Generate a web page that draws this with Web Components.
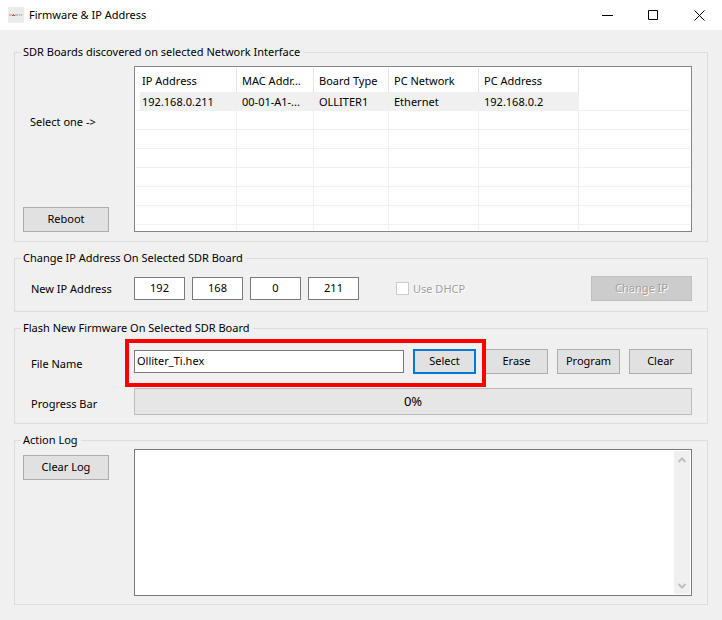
<!DOCTYPE html>
<html lang="en">
<head>
<meta charset="utf-8">
<meta name="viewport" content="width=device-width, initial-scale=1">
<title>Firmware &amp; IP Address</title>
<style>
  html { height: 100%; }
  body {
    margin: 0; min-height: 100%; display: flex;
    font: 11px/16px "Noto Sans", "Open Sans", sans-serif;
    color: #000; background: #f0f0f0;
  }
</style>
</head>
<body>
<firmware-window></firmware-window>

<script>
const define = (name, html, setup) => {
  const template = document.createElement('template');
  template.innerHTML = `<style>*{box-sizing:border-box}</style>${html}`;
  customElements.define(name, class extends HTMLElement {
    constructor() {
      super();
      this.attachShadow({ mode: 'open' }).append(template.content.cloneNode(true));
    }
    connectedCallback() { if (setup) setup(this, this.shadowRoot); }
  });
};

/* Push button; attributes: disabled, default */
define('push-button', `
<style>
  :host { display: block; width: 63px; flex: none; }
  button {
    display: block; width: 100%; height: 25px; padding: 0 0 2px;
    font: inherit; color: inherit; background: #e1e1e1;
    border: 1px solid #adadad; border-radius: 0; white-space: nowrap;
  }
  :host([default]) button { border: 2px solid #0078d7; }
  :host([disabled]) button {
    color: #a0a0a0; background: #ccc; border-color: #bfbfbf;
    text-shadow: 1px 1px #fff;
  }
</style>
<button type="button"><slot></slot></button>`, (host, root) => {
  root.querySelector('button').disabled = host.hasAttribute('disabled');
});

/* Titled frame with a left column and a main column */
define('group-box', `
<style>
  :host { display: flex; }
  fieldset {
    flex: 1; min-width: 0; margin: 0; border: 1px solid #dcdcdc;
    padding: var(--pad-top, 10px) 15px var(--pad-bottom, 10px) 8px;
  }
  legend { height: 16px; margin-left: -2px; padding: 0 3px 0 2px; white-space: nowrap; }
  slot { display: grid; grid-template-columns: 86px minmax(0, 1fr); column-gap: 25px; height: 100%; }
</style>
<fieldset><legend></legend><slot></slot></fieldset>`, (host, root) => {
  root.querySelector('legend').textContent = host.getAttribute('caption');
});

define('title-bar', `
<style>
  :host { display: flex; align-items: center; height: 30px; background: #fff; padding-left: 8px; flex: none; }
  h1 { flex: 1; margin: 0 0 0 5px; font: inherit; }
  button { width: 46px; height: 30px; padding: 0; border: 0; background: none; display: grid; place-items: center; }
  svg { display: block; }
</style>
<svg width="16" height="16" viewBox="0 0 16 16" aria-hidden="true" shape-rendering="crispEdges">
  <rect width="16" height="16" fill="#ebebeb"/>
  <path d="M1 7h2v2H1zM3 7h1v2H3zM7 7h2v2H7zM9 7h1v2H9zM11 7h1v2h-1zM13 7h2v1h-2z" fill="#c0c0c6"/>
  <path d="M3 8h1v1H3zM10 7h1v1h-1zM12 8h2v1h-2z" fill="#d6cccc"/>
  <path d="M5 7h1v1h1v1H4V8h1z" fill="#dc4a4a"/>
</svg>
<h1>Firmware &amp; IP Address</h1>
<button type="button" aria-label="Minimize"><svg width="11" height="11"><path d="M0 5h11v1H0z"/></svg></button>
<button type="button" aria-label="Maximize"><svg width="11" height="11"><path d="M.5.5h9v9h-9z" fill="none" stroke="#000"/></svg></button>
<button type="button" aria-label="Close"><svg width="11" height="11"><path d="M.5.5l10 10M10.500.5l-10 10" stroke="#000"/></svg></button>`);

define('board-list', `
<style>
  :host { display: block; background: #fff; border: 1px solid #828790; padding: 1px; }
  table { width: 100%; table-layout: fixed; border-collapse: separate; border-spacing: 0; }
  th, td { padding: 1px 0 0 5px; font-weight: normal; text-align: left; white-space: nowrap; overflow: hidden; border-right: 1px solid #f0f0f0; }
  th:first-child, td:first-child { padding-left: 6px; }
  th:last-child, td:last-child { border-right: 0; }
  th { height: 24px; border-right-color: #e5e5e5; }
  td { height: 19px; border-bottom: 1px solid #f0f0f0; }
  tr.selected td:not(:last-child) { background: #f0f0f0; }
  tr.selected td:first-child { background: linear-gradient(#f0f0f0, #f0f0f0) 4px 0 no-repeat; }
  tr.partial td { height: 5px; border-bottom: 0; }
  .c1 { width: 101px } .c2 { width: 77px } .c3 { width: 75px } .c4 { width: 90px } .c5 { width: 100px }
</style>
<table aria-label="Discovered SDR boards">
  <colgroup><col class="c1"><col class="c2"><col class="c3"><col class="c4"><col class="c5"><col></colgroup>
  <thead><tr><th>IP Address</th><th>MAC Addr...</th><th>Board Type</th><th>PC Network</th><th>PC Address</th><th></th></tr></thead>
  <tbody><tr class="selected"><td>192.168.0.211</td><td>00-01-A1-...</td><td>OLLITER1</td><td>Ethernet</td><td>192.168.0.2</td><td></td></tr></tbody>
</table>`, (host, root) => {
  const body = root.querySelector('tbody');
  for (let i = 0; i < 7; i++) {
    const row = body.insertRow();
    if (i === 6) row.className = 'partial';
    for (let c = 0; c < 6; c++) row.insertCell();
  }
});

const fieldStyle = `
  input[type=text] {
    height: 23px; min-width: 0; margin: 0; padding: 0 2px 2px; font: inherit; color: inherit;
    background: #fff; border: 1px solid #7a7a7a; border-radius: 0; outline: 0;
  }
  .caption { padding-left: 8px; white-space: nowrap; }`;

define('address-form', `
<style>
  ${fieldStyle}
  :host { display: grid; grid-template-columns: subgrid; grid-column: 1 / -1; align-items: center; }
  .row { display: flex; align-items: center; gap: 7px; }
  .row input[type=text] { width: 51px; text-align: center; }
  .check { display: flex; align-items: center; gap: 4px; margin-left: 30px; color: #a0a0a0; text-shadow: 1px 1px #fff; white-space: nowrap; }
  .check input { appearance: none; width: 13px; height: 13px; margin: 0; background: #fff; border: 1px solid #ccc; }
  push-button { width: 101px; margin-left: auto; }
</style>
<label class="caption" for="octet">New IP Address</label>
<div class="row">
  <input id="octet" type="text" value="192">
  <input type="text" value="168" aria-label="Second octet">
  <input type="text" value="0" aria-label="Third octet">
  <input type="text" value="211" aria-label="Fourth octet">
  <label class="check"><input type="checkbox" disabled>Use DHCP</label>
  <push-button disabled>Change IP</push-button>
</div>`);

define('flash-form', `
<style>
  ${fieldStyle}
  :host { display: grid; grid-template-columns: subgrid; grid-column: 1 / -1; align-items: center; row-gap: 14px; }
  .row, .pick { display: flex; align-items: center; gap: 9px; }
  .pick { flex: 1; position: relative; min-width: 0; }
  .pick input { flex: 1; }
  .pick::after {
    content: ""; position: absolute; z-index: 1; inset: -10px -10px -13px -9px;
    border: 4px solid #f00; pointer-events: none;
  }
  .caption { padding-top: 4px; }
  .bar {
    height: 27px; display: grid; place-items: center; font-size: 13px; padding-bottom: 1px;
    background: #e6e6e6; border: 1px solid #bcbcbc;
  }
</style>
<label class="caption" for="file">File Name</label>
<div class="row">
  <div class="pick"><input id="file" type="text" value="Olliter_Ti.hex"><push-button default>Select</push-button></div>
  <push-button>Erase</push-button>
  <push-button>Program</push-button>
  <push-button>Clear</push-button>
</div>
<span class="caption" id="progress">Progress Bar</span>
<div class="bar" role="progressbar" aria-labelledby="progress" aria-valuenow="0">0%</div>`);

define('log-view', `
<style>
  :host { display: flex; min-height: 147px; background: #fff; border: 1px solid #7a7a7a; padding: 1px; }
  textarea { flex: 1; min-width: 0; border: 0; padding: 2px; margin: 0; resize: none; outline: 0; font: inherit; background: #fff; overflow: hidden; }
  .scroll { width: 16px; display: flex; flex-direction: column; justify-content: space-between; background: #f0f0f0; }
  button { height: 17px; padding: 0; border: 0; background: none; display: grid; place-items: center; }
  path { fill: none; stroke: #bfbfbf; stroke-width: 2; }
</style>
<textarea aria-label="Action log" readonly></textarea>
<div class="scroll">
  <button type="button" aria-label="Scroll up" disabled><svg width="8" height="6"><path d="M.5 5l3.500-3.500L7.500 5"/></svg></button>
  <button type="button" aria-label="Scroll down" disabled><svg width="8" height="6"><path d="M.5 1L4 4.500 7.500 1"/></svg></button>
</div>`);

define('firmware-window', `
<style>
  :host { flex: 1; min-width: 0; display: flex; flex-direction: column; }
  main { flex: 1; display: flex; flex-direction: column; gap: 8px; padding: 14px 14px 15px; }
  .boards { --pad-top: 6px; --pad-bottom: 9px; }
  .flash { --pad-top: 13px; --pad-bottom: 8px; }
  .log { --pad-top: 1px; --pad-bottom: 8px; flex: 1; }
  .side { display: flex; flex-direction: column; justify-content: space-between; }
  .side p { margin: 48px 0 0; padding-left: 7px; white-space: nowrap; }
  push-button { width: 100%; }
  .log push-button { margin-top: 6px; }
</style>
<title-bar></title-bar>
<main>
  <group-box class="boards" caption="SDR Boards discovered on selected Network Interface">
    <div class="side"><p>Select one -&gt;</p><push-button>Reboot</push-button></div>
    <board-list></board-list>
  </group-box>
  <group-box caption="Change IP Address On Selected SDR Board"><address-form></address-form></group-box>
  <group-box class="flash" caption="Flash New Firmware On Selected SDR Board"><flash-form></flash-form></group-box>
  <group-box class="log" caption="Action Log">
    <push-button>Clear Log</push-button>
    <log-view></log-view>
  </group-box>
</main>`);
</script>
</body>
</html>
